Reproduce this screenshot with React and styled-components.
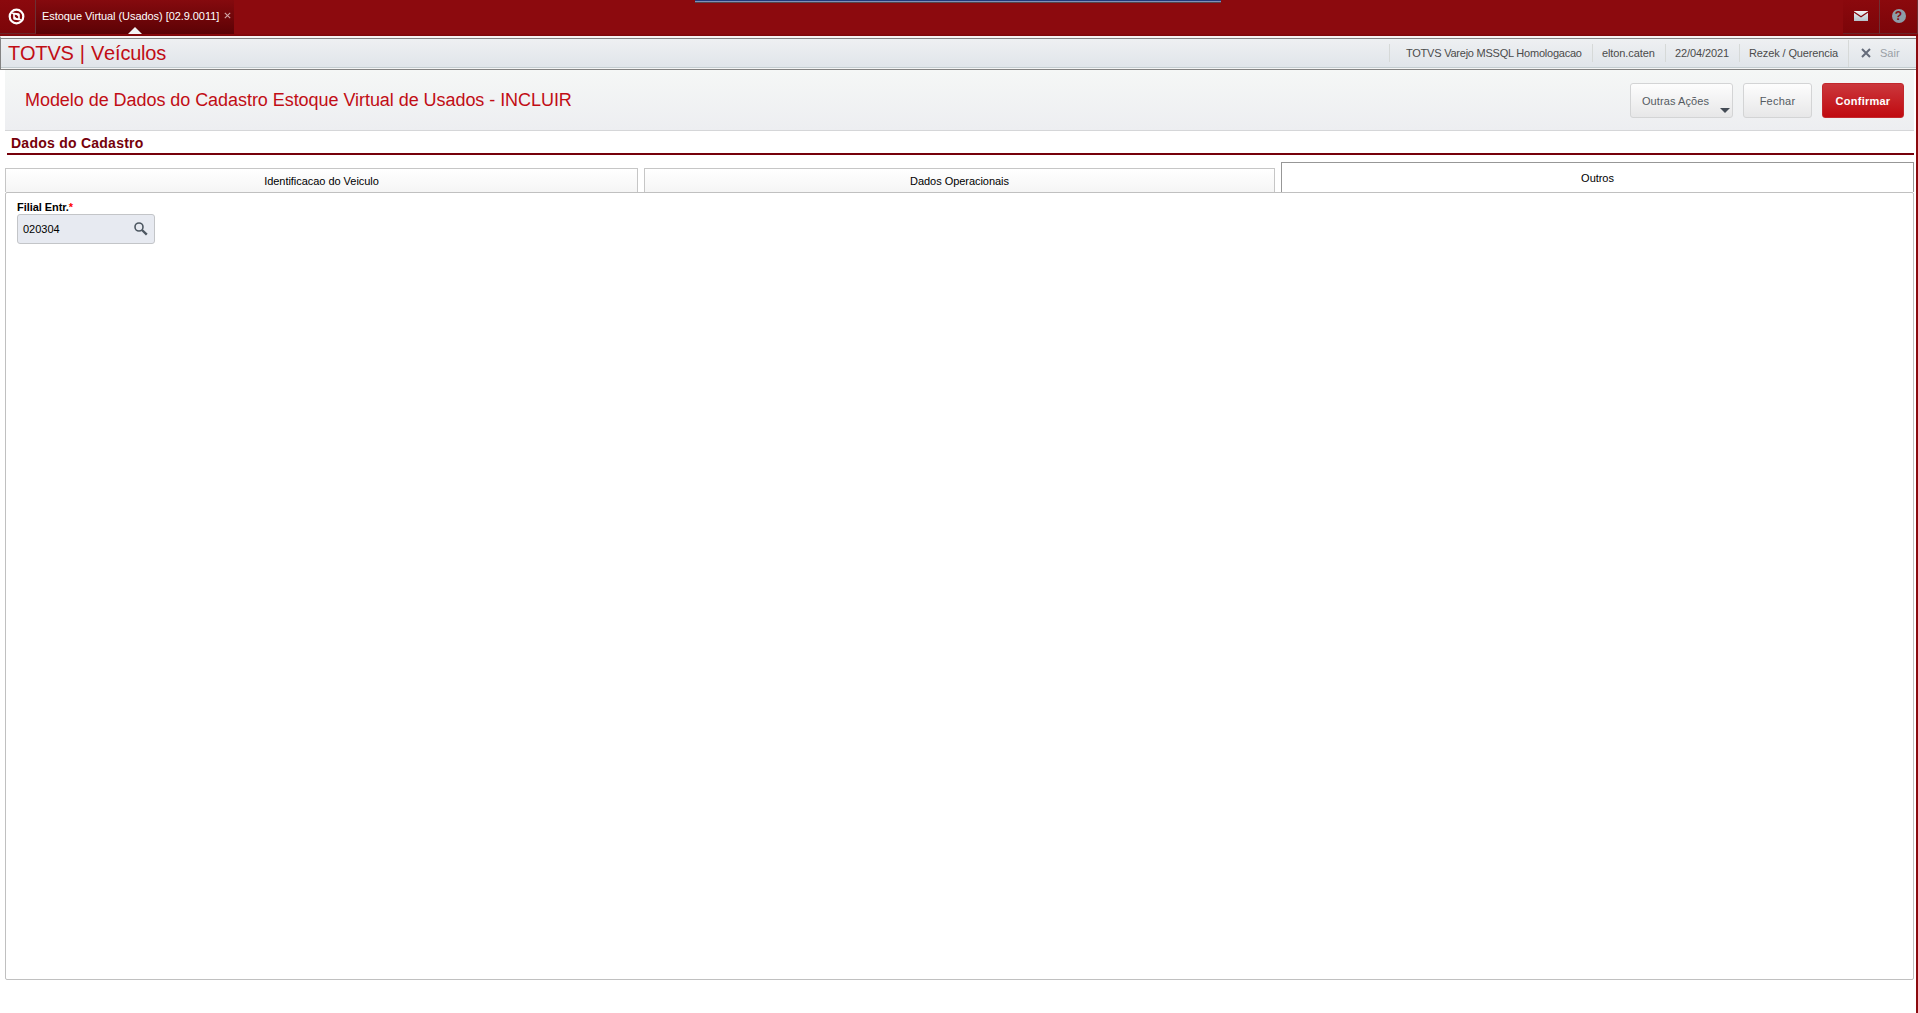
import React from 'react';
import styled, { createGlobalStyle } from 'styled-components';

const sessionInfo = [
  { text: 'TOTVS Varejo MSSQL Homologacao', width: 203, pad: 16, spacing: -0.23 },
  { text: 'elton.caten', width: 73, pad: 9, spacing: -0.1 },
  { text: '22/04/2021', width: 74, pad: 9, spacing: -0.1 },
  { text: 'Rezek / Querencia', width: 109, pad: 9, spacing: -0.12 },
];

const tabs = [
  { label: 'Identificacao do Veiculo', width: 633 },
  { label: 'Dados Operacionais', width: 631 },
  { label: 'Outros', width: 633, active: true },
];

const App = () => {
  return (
    <>
      <GlobalStyle />
      <Window>
        <TopBar>
          <TopCell $width={36} $offset={2}>
            <LogoIcon />
          </TopCell>
          <ProgramTab>
            <ProgramName>Estoque Virtual (Usados) [02.9.0011]</ProgramName>
            <TabClose viewBox="0 0 7 7">
              <path d="M0.8 0.8 L6.2 6.2 M6.2 0.8 L0.8 6.2" />
            </TabClose>
            <TabPointer />
          </ProgramTab>
          <TopSpacer />
          <TopCell $width={37}>
            <MailIcon />
          </TopCell>
          <TopCell $width={38}>
            <HelpMark>?</HelpMark>
          </TopCell>
          <DockedBar />
        </TopBar>

        <Body>
          <ModuleBar>
            <ModuleName>TOTVS | Veículos</ModuleName>
            {sessionInfo.map((info) => (
              <InfoItem key={info.text} $width={info.width} $pad={info.pad}>
                <InfoText $spacing={info.spacing}>{info.text}</InfoText>
              </InfoItem>
            ))}
            <ExitButton>
              <ExitIcon viewBox="0 0 10 10">
                <path d="M1 1 L9 9 M9 1 L1 9" />
              </ExitIcon>
              Sair
            </ExitButton>
          </ModuleBar>

          <FormHeader>
            <FormTitle>
              Modelo de Dados do Cadastro Estoque Virtual de Usados - INCLUIR
            </FormTitle>
            <Button $width={103} $menu>
              Outras Ações
              <MenuArrow />
            </Button>
            <Button $width={69}>Fechar</Button>
            <Button $width={82} $primary>
              Confirmar
            </Button>
          </FormHeader>

          <SectionTitle>Dados do Cadastro</SectionTitle>

          <Tabs>
            {tabs.map((tab) => (
              <Tab key={tab.label} $width={tab.width} $active={tab.active}>
                {tab.label}
              </Tab>
            ))}
          </Tabs>

          <Panel>
            <FieldLabel>
              Filial Entr.<Required>*</Required>
            </FieldLabel>
            <Field>
              <span>020304</span>
              <SearchIcon />
            </Field>
          </Panel>
        </Body>
      </Window>
    </>
  );
};

export default App;

// Icons
const LogoIcon = () => (
  <svg width="17" height="17" viewBox="0 0 17 17">
    <circle cx="8.5" cy="8.5" r="6.8" fill="none" stroke="#fff" strokeWidth="2.2" />
    <path
      d="M2 4.2 L10.6 5.2 Q11.8 5.4 11.8 6.6 L11.8 10.6 L15 12.8 L6.4 11.8 Q5.2 11.6 5.2 10.4 L5.2 6.4 Z"
      fill="#fff"
    />
    <path d="M6.8 6.8 L8.6 7 L10.2 8.6 L10.2 10.2 L8.4 10 L6.8 8.4 Z" fill="#86090d" />
  </svg>
);

const MailIcon = () => (
  <svg width="14" height="10" viewBox="0 0 14 10">
    <defs>
      <linearGradient id="mail" x1="0" y1="0" x2="0" y2="1">
        <stop offset="0" stopColor="#f2f5f6" />
        <stop offset="1" stopColor="#b4c2ca" />
      </linearGradient>
    </defs>
    <rect width="14" height="10" fill="url(#mail)" />
    <path d="M0 1 L7 5.8 L14 1" fill="none" stroke="#86090d" strokeWidth="1.2" />
  </svg>
);

const SearchIcon = () => (
  <svg width="14" height="14" viewBox="0 0 14 14">
    <circle cx="5" cy="5" r="4" fill="none" stroke="#4d5761" strokeWidth="1.6" />
    <path d="M8 8 L12.8 12.6" stroke="#4d5761" strokeWidth="2.4" />
  </svg>
);

// Styled Components
const GlobalStyle = createGlobalStyle`
  * {
    box-sizing: border-box;
  }
  body {
    margin: 0;
    overflow: hidden;
    background: #fff;
    font-family: 'Liberation Sans', Arial, sans-serif;
    font-size: 11px;
    line-height: 14px;
    color: #000;
  }
`;

const Window = styled.div`
  height: 1013px;
  background: #8b0a0e;
`;

const TopBar = styled.header`
  position: relative;
  display: flex;
  height: 36px;
  background: linear-gradient(#8c0a0e 34px, #7a0507);
`;

const TopCell = styled.div`
  display: flex;
  align-items: center;
  justify-content: center;
  width: ${(props) => props.$width}px;
  height: 34px;
  padding: 0 ${(props) => props.$offset || 0}px 1px 0;
  background: linear-gradient(#8b090d, #7c0509);
  border-right: 1px solid #6d3034;
  border-bottom: 1px solid #6a2427;
`;

const ProgramTab = styled.div`
  position: relative;
  display: flex;
  align-items: center;
  width: 198px;
  height: 34px;
  padding: 0 3px 2px 6px;
  background: linear-gradient(#850a0e, #5c0205);
`;

const ProgramName = styled.span`
  flex: 1;
  white-space: nowrap;
  letter-spacing: -0.06px;
  color: #fff;
`;

const TabClose = styled.svg`
  width: 7px;
  height: 7px;
  margin-bottom: 2px;
  fill: none;
  stroke: #d0a5a6;
  stroke-width: 1.1;
`;

const TabPointer = styled.i`
  position: absolute;
  left: 92px;
  bottom: 0;
  border: 7px solid transparent;
  border-top: 0;
  border-bottom-color: #f4f4f4;
`;

const TopSpacer = styled.div`
  flex: 1;
`;

const HelpMark = styled.span`
  width: 14px;
  height: 14px;
  border-radius: 50%;
  background: #8d9ca8;
  color: #86090d;
  font-size: 12px;
  font-weight: bold;
  text-align: center;
`;

const DockedBar = styled.div`
  position: absolute;
  left: 695px;
  top: 0;
  width: 526px;
  height: 3px;
  background: linear-gradient(#233a7c 1px, #8290b8 1px 2px, #52474f 2px);
`;

const Body = styled.main`
  width: 1916px;
  height: 977px;
  background: #fff;
`;

const ModuleBar = styled.div`
  display: flex;
  align-items: center;
  height: 34px;
  padding: 0 1px 2px 7px;
  border-top: 2px solid #f7f3f2;
  border-left: 1px solid #838383;
  background: linear-gradient(
    #838383 1px,
    #eef0f2 1px,
    #e0e5ea 29px,
    #c3ccd0 29px 30px,
    #f4f5f5 30px 31px,
    #838383 31px
  );
`;

const ModuleName = styled.h1`
  flex: 1;
  margin: 0 0 1px;
  font-size: 20px;
  font-weight: normal;
  font-kerning: none;
  letter-spacing: -0.2px;
  word-spacing: 0.8px;
  line-height: 24px;
  color: #c10d15;
`;

const InfoItem = styled.div`
  width: ${(props) => props.$width}px;
  height: 18px;
  padding: 2px 0 0 ${(props) => props.$pad}px;
  border-left: 1px solid #d6d9d8;
  color: #4b4b4b;
`;

const InfoText = styled.span`
  white-space: nowrap;
  letter-spacing: ${(props) => props.$spacing}px;
`;

const ExitButton = styled.div`
  display: flex;
  align-items: center;
  gap: 9px;
  width: 67px;
  height: 27px;
  padding: 0 0 1px 12px;
  border-left: 1px solid #d6d9d8;
  color: #9a9fa6;
`;

const ExitIcon = styled.svg`
  width: 10px;
  height: 10px;
  stroke: #656c7a;
  stroke-width: 2;
`;

const FormHeader = styled.div`
  display: flex;
  gap: 10px;
  height: 61px;
  margin: 0 2px 0 5px;
  padding: 13px 10px 0 20px;
  border-bottom: 1px solid #d5d6d8;
  background: linear-gradient(#f5f7f6, #edeef1);
`;

const FormTitle = styled.h2`
  flex: 1;
  margin: 6px 0 0;
  font-size: 18px;
  font-weight: normal;
  letter-spacing: -0.05px;
  line-height: 22px;
  white-space: nowrap;
  color: #c10d15;
`;

const Button = styled.button`
  position: relative;
  width: ${(props) => props.$width}px;
  height: 35px;
  padding: ${(props) => (props.$menu ? '0 12px 0 0' : '0')};
  border: 1px solid ${(props) => (props.$primary ? '#c2282d' : '#d3d4d5')};
  border-radius: 3px;
  background: ${(props) =>
    props.$primary
      ? 'linear-gradient(#cb373c, #c00a10)'
      : 'linear-gradient(#fdfdfd, #e7e7e8)'};
  font-family: inherit;
  font-size: 11px;
  font-weight: ${(props) => (props.$primary ? 'bold' : 'normal')};
  letter-spacing: ${(props) => (props.$menu ? 0.1 : 0.25)}px;
  white-space: nowrap;
  color: ${(props) => (props.$primary ? '#fff' : '#555b62')};
`;

const MenuArrow = styled.i`
  position: absolute;
  right: 2px;
  bottom: 4px;
  border: 5px solid transparent;
  border-top-color: #434b55;
  border-bottom: 0;
`;

const SectionTitle = styled.h3`
  height: 24px;
  margin: 0 2px 0 7px;
  padding: 3px 0 0 4px;
  border-bottom: 2px solid #76000a;
  font-size: 14px;
  line-height: 18px;
  letter-spacing: 0.25px;
  color: #76000a;
`;

const Tabs = styled.div`
  display: flex;
  align-items: flex-end;
  gap: 6px;
  height: 37px;
  padding-left: 5px;
`;

const Tab = styled.div`
  width: ${(props) => props.$width}px;
  height: ${(props) => (props.$active ? 30 : 24)}px;
  padding-top: ${(props) => (props.$active ? 8 : 5)}px;
  border: 1px solid ${(props) => (props.$active ? '#979797' : '#c6c6c6')};
  border-bottom: 0;
  background: ${(props) =>
    props.$active ? '#fff' : 'linear-gradient(#fff, #f5f5f5)'};
  letter-spacing: -0.04px;
  text-align: center;
`;

const Panel = styled.section`
  height: 788px;
  margin: 0 2px 0 5px;
  padding: 7px 0 0 11px;
  border: 1px solid #c0c0c0;
  border-radius: 2px;
`;

const FieldLabel = styled.div`
  font-weight: bold;
  letter-spacing: -0.06px;
`;

const Required = styled.span`
  color: #f00;
`;

const Field = styled.div`
  display: flex;
  align-items: center;
  justify-content: space-between;
  width: 138px;
  height: 30px;
  padding: 0 6px 0 5px;
  border: 1px solid #c3c5c8;
  border-radius: 3px;
  background: #e7eaf1;
`;
